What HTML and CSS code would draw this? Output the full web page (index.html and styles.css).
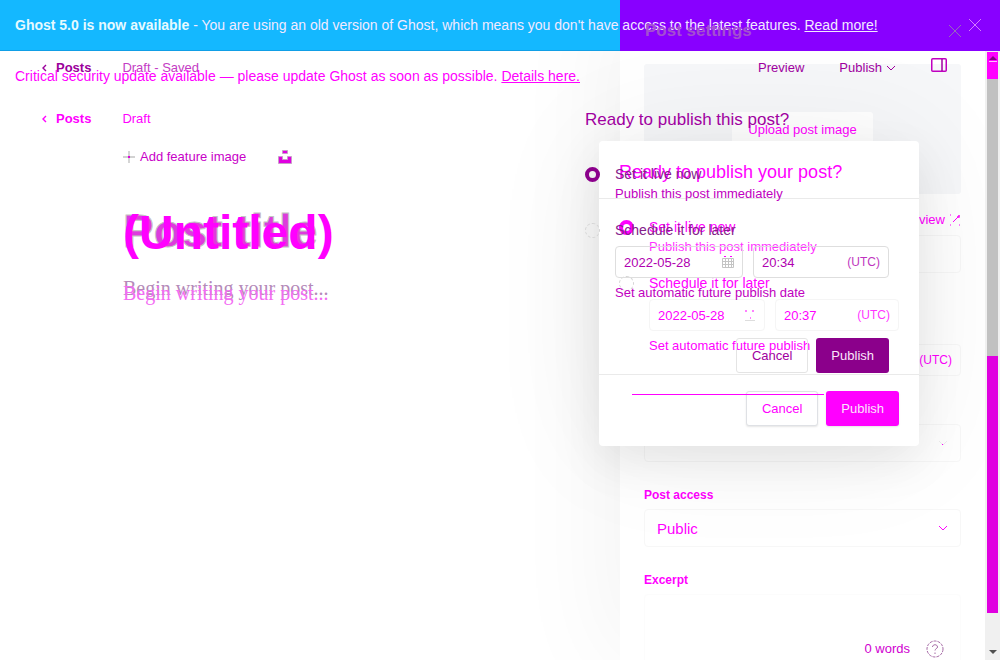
FILE: index.html
```
<!DOCTYPE html>
<html lang="en">
<head>
<meta charset="utf-8">
<title>Ghost editor</title>
<link rel="stylesheet" href="styles.css">
</head>
<body>
<main class="stage">
  <aside class="layer settings">
    <div class="settings-panel">
      <div class="image-box"><button class="upload">Upload post image</button></div>
      <div class="url-row"><a href="#">Preview</a>
        <svg width="12" height="12" viewBox="0 0 12 12" stroke="#f0f" fill="none"><path d="M4 8L9 3" /><path d="M8 3h2V1" stroke-width="1.5"/><path d="M1 1h1M1 11h1M10 11h1" /></svg>
      </div>
      <input class="field url-field" aria-label="Post URL">
      <div class="field date-field"><span>(UTC)</span></div>
      <div class="select-wrap author"><select class="field select" aria-label="Author"><option></option></select><svg width="10" height="6" viewBox="0 0 10 6"><path d="M1 1l4 4 4-4" fill="none" stroke="#eee"/><path d="M4 4h1v1h-1z" fill="#f0f"/></svg></div>
      <label class="label" for="access">Post access</label>
      <div class="select-wrap"><select class="field select" id="access"><option>Public</option></select><svg width="10" height="6" viewBox="0 0 10 6"><path d="M1 1l4 4 4-4" fill="none" stroke="#f0f"/></svg></div>
      <label class="label" for="excerpt">Excerpt</label>
      <textarea class="field excerpt" id="excerpt"></textarea>
    </div>
  </aside>

  <section class="layer front-editor">
    <nav class="bar"><a class="posts" href="#"><svg width="6" height="8" viewBox="0 0 6 8"><path d="M5 1L2 4l3 3" fill="none" stroke="currentColor" stroke-width="1.4"/></svg>Posts</a><span class="saved">Draft - Saved</span>
      <div class="actions"><button class="plain">Preview</button>
      <button class="plain publish-menu">Publish <svg width="10" height="6" viewBox="0 0 10 6"><path d="M1 1l4 4 4-4" fill="none" stroke="currentColor"/></svg></button>
      <button class="plain panel-toggle" aria-label="Settings"><svg width="16" height="14" viewBox="0 0 16 14"><rect x=".75" y=".75" width="14.5" height="12.5" rx="1" fill="none" stroke="#c000c0" stroke-width="1.5"/><path d="M11 1v12" stroke="#a000a0" stroke-width="1.5"/></svg></button></div>
    </nav>
    <div class="feature">
      <button class="plain add"><svg width="12" height="12" viewBox="0 0 12 12"><path d="M6 0v12M0 6h12" stroke="#c4c4c4" stroke-width="1.4"/><path d="M5 5h2v2H5z" fill="#d0d"/></svg>Add feature image</button>
      <button class="plain" aria-label="Unsplash"><svg width="14" height="14" viewBox="0 0 14 14"><path d="M4.500.5h5v3h-5zM.5 6.500h4v3h5v-3h4v7H.5z" fill="#e000e0" stroke="#c8a0c8"/></svg></button>
    </div>
    <h2 class="title post-title">Post title</h2>
    <p class="begin">Begin writing your post...</p>
    <footer class="words"><span>0 words</span><svg width="18" height="18" viewBox="0 0 18 18" fill="none" stroke="#a66aa6"><circle cx="9" cy="9" r="8" stroke-dasharray="3 1"/><path d="M6.500 7c0-3 5-3 5 0 0 1.700-2.500 1.700-2.500 3.500M9 12.500v1.500"/></svg></footer>
  </section>

  <section class="layer back-editor">
    <p class="critical">Critical security update available — please update Ghost as soon as possible. <a href="#">Details here.</a></p>
    <nav class="bar"><a class="posts" href="#"><svg width="6" height="8" viewBox="0 0 6 8"><path d="M5 1L2 4l3 3" fill="none" stroke="currentColor" stroke-width="1.4"/></svg>Posts</a><span>Draft</span></nav>
    <h1 class="title untitled">(Untitled)</h1>
    <p class="begin">Begin writing your post...</p>
  </section>

  <div class="layer modal-layer">
    <form class="modal">
      <header><h2>Ready to publish your post?</h2></header>
      <div class="options">
        <div class="option"><input type="radio" name="m" id="m1" checked><div><label class="name" for="m1">Set it live now</label><p class="dim">Publish this post immediately</p></div></div>
        <div class="option"><input type="radio" name="m" id="m2"><div><label class="name" for="m2">Schedule it for later</label>
          <div class="when"><div class="box"><input aria-label="Date" value="2022-05-28"><svg width="12" height="12" viewBox="0 0 12 12"><path d="M1 2h2M8 2h2M6 9h1" stroke="#f0f"/><path d="M1 11.500h10" stroke="#ddd"/></svg></div><div class="box"><input aria-label="Time" value="20:37"><span>(UTC)</span></div></div>
          <p>Set automatic future publish</p></div></div>
      </div>
      <footer><button type="button" class="btn">Cancel</button><button type="button" class="btn primary">Publish</button></footer>
    </form>
  </div>

  <div class="layer sheet-layer">
    <form class="sheet">
      <h2>Ready to publish this post?</h2>
      <div class="options">
        <div class="option"><input type="radio" name="s" id="s1" checked><div><label class="name" for="s1">Set it live now</label><p>Publish this post immediately</p></div></div>
        <div class="option"><input type="radio" name="s" id="s2"><div><label class="name" for="s2">Schedule it for later</label>
          <div class="when"><div class="box"><input aria-label="Publish date" value="2022-05-28"><svg width="12" height="12" viewBox="0 0 12 12" fill="none" stroke="#c4c4c4"><path d="M.5 2.500h11v9H.5zM0 5.500h12M0 8.500h12M3.500 3v9M6.500 3v9M9.500 3v9"/><path d="M2 .5h2M8 .5h2" stroke="#f0f"/></svg></div><div class="box"><input aria-label="Publish time" value="20:34"><span>(UTC)</span></div></div>
          <p>Set automatic future publish date</p></div></div>
      </div>
      <footer><button type="button" class="btn">Cancel</button><button type="button" class="btn primary">Publish</button></footer>
      <div class="rule"></div>
    </form>
  </div>

  <div class="layer banner-layer">
    <div class="banner">
      <p><strong>Ghost 5.0 is now available</strong> - You are using an old version of Ghost, which means you don't have access to the latest features. <a href="#">Read more!</a></p>
      <button class="plain" aria-label="Dismiss"><svg width="12" height="12" viewBox="0 0 12 12"><path d="M0 0l12 12M12 0L0 12" stroke="#d47bff"/></svg></button>
    </div>
  </div>
  <div class="layer settings-title-layer"><div class="settings-title"><h3>Post settings</h3><button class="plain" aria-label="Close settings"><svg width="12" height="12" viewBox="0 0 12 12"><path d="M0 0l12 12M12 0L0 12" stroke="#956bb9"/></svg></button></div></div>
  <div class="layer scroll-layer"><div class="scrollbar"><div class="up"><svg width="10" height="6" viewBox="0 0 10 6"><path d="M5 0l4 4H1z" fill="#850085"/><path d="M1 5.500h8" stroke="#fbf"/></svg></div><div class="thumb"></div><div class="low"></div><div class="down"><svg width="8" height="4" viewBox="0 0 8 4"><path d="M0 0h8L4 4z" fill="#505050"/></svg></div></div></div>
</main>
</body>
</html>
```
FILE: styles.css
```
* { box-sizing: border-box; }
body, h1, h2, h3, p { margin: 0; }
body {
  font: 13px/19px "Liberation Sans", Arial, sans-serif;
  color: #f0f;
  background: #fff;
}
button, input, select, textarea { font: inherit; color: inherit; margin: 0; }
a { color: inherit; }
svg { display: block; flex: none; }
.stage { position: relative; min-height: 100vh; overflow: hidden; }
.layer { position: absolute; inset: 0; pointer-events: none; }
.plain { display: flex; align-items: center; border: 0; padding: 0; background: none; }

/* Settings panel */
.settings { display: flex; justify-content: flex-end; }
.settings-panel {
  width: 380px;
  padding: 64px 39px 0 24px;
  background: #fff;
  box-shadow: -10px 0 100px rgba(0, 0, 0, .05);
  display: flex;
  flex-direction: column;
}
.image-box { height: 130px; flex: none; background: #f6f7f9; border-radius: 3px; display: flex; justify-content: center; align-items: center; }
.upload { height: 34px; padding: 0 16px; border: 0; border-radius: 3px; background: #fff; }
.url-row { display: flex; justify-content: flex-end; align-items: center; gap: 4px; margin-top: 16px; }
.url-row a { text-decoration: none; }
.field { width: 100%; height: 38px; flex: none; border: 1px solid #f7f7f7; border-radius: 4px; background: transparent; }
.url-field { margin-top: 6px; }
.date-field { display: flex; justify-content: flex-end; align-items: center; height: 32px; margin-top: 71px; padding-right: 8px; font-size: 12px; }
.select-wrap { display: grid; align-items: center; }
.select-wrap > * { grid-area: 1 / 1; }
.select-wrap svg { justify-self: end; margin-right: 13px; }
.author { margin-top: 48px; }
.select { appearance: none; padding: 0 12px; font-size: 15px; }
.label { margin: 24px 0 4px; font-size: 12px; font-weight: bold; }
.excerpt { height: 80px; border-color: #fcfcfc; resize: none; }

/* Editor */
.critical { font-size: 14px; padding-left: 15px; }
.back-editor { padding-top: 67px; }
.front-editor { padding-top: 58px; color: #b800b8; display: flex; flex-direction: column; }
.bar { display: flex; align-items: center; gap: 31px; padding: 0 53px 0 41px; }
.back-editor .bar { margin-top: 23px; }
.posts { display: flex; align-items: center; gap: 9px; text-decoration: none; font-weight: bold; }
.front-editor .posts { color: #9b009b; }
.saved { color: #c43cc4; }
.actions { display: flex; align-items: center; gap: 35px; margin-left: auto; color: #a000a0; }
.publish-menu { gap: 4px; }
.panel-toggle { padding-bottom: 5px; }
.feature { display: flex; align-items: center; gap: 32px; padding: 70px 0 0 123px; }
.add { gap: 5px; color: #c800c8; }
.title { padding-left: 123px; font-weight: bold; line-height: 58px; }
.untitled { margin-top: 76px; font-size: 48px; }
.post-title { margin-top: 36px; font-size: 46px; color: #dc3cdc; -webkit-text-stroke: 1px #c4c4c4; }
.begin { padding-left: 123px; font: 20px/24px "Liberation Serif", Georgia, serif; }
.back-editor .begin { margin-top: 19px; color: #f36df3; }
.front-editor .begin { margin-top: 16px; color: #b58ab9; }
.words { display: flex; justify-content: flex-end; align-items: center; gap: 16px; margin-top: auto; padding: 0 56px 2px 0; color: #d000d0; }

/* Publish dialogs */
.modal-layer { display: flex; justify-content: flex-end; align-items: flex-start; padding: 141px 81px 0 0; }
.modal {
  width: 320px;
  background: #fff;
  border-radius: 4px;
  box-shadow: 0 0 120px rgba(0, 0, 0, .07), 0 16px 46px rgba(0, 0, 0, .08);
}
.modal header { padding: 20px 20px 15px; border-bottom: 1px solid #eaeaea; }
.modal h2, .sheet h2 { font-weight: normal; line-height: 22px; }
.modal h2 { font-size: 18px; }
.sheet h2 { font-size: 17px; color: #a000a0; }
.options { display: flex; flex-direction: column; gap: 18px; }
.modal .options { padding: 19px 20px; }
.option { display: flex; gap: 15px; }
.option > div { flex: 1; min-width: 0; }
.option > input { appearance: none; flex: none; width: 15px; height: 15px; margin-top: 2px; border: 1px dashed #d4d4d4; border-radius: 50%; }
.option > input:checked { border: 4px solid #f0f; }
.name { display: block; font-size: 14px; }
.dim { opacity: .8; }
.when { display: flex; gap: 10px; margin: 6px 0 5px; }
.box { flex: 1 1 90px; min-width: 0; display: flex; align-items: center; justify-content: space-between; height: 32px; padding: 0 8px; border: 1px solid #f5f5f5; border-radius: 4px; }
.box + .box { flex-basis: 98px; }
.box input { min-width: 0; width: 72px; padding: 0; border: 0; background: none; }
.box span { font-size: 12px; opacity: .8; }
.modal footer, .sheet footer { display: flex; justify-content: flex-end; gap: 8px; }
.modal footer { padding: 16px 20px 20px; border-top: 1px solid #eaeaea; }
.btn { height: 35px; padding: 0 15px; border: 1px solid #dfe1e5; border-radius: 3px; background: #fff; }
.modal .btn { box-shadow: 0 1px 2px rgba(0, 0, 0, .1); }
.btn.primary { border: 0; padding: 0 15px; color: #fbe6fb; background: #f0f; }
.sheet-layer { display: flex; justify-content: flex-end; align-items: flex-start; padding: 109px 111px 0 0; }
.sheet { width: 304px; color: #c000c0; }
.sheet .options { margin-top: 34px; }
.sheet .option > input:checked { border-color: #8b008b; }
.sheet .name { color: #85208a; }
.sheet .box { border-color: #dedede; color: #b000b0; }
.sheet footer { margin-top: 36px; }
.sheet .btn { color: #a000a0; background: none; border-color: #e4e4e4; }
.sheet .btn.primary { color: #fbe6fb; background: #8b008b; }
.rule { width: 192px; height: 1px; margin: 21px 65px 0 auto; background: #f0f; }

/* Upgrade banner */
.banner {
  display: flex;
  align-items: center;
  justify-content: space-between;
  height: 51px;
  padding: 0 19px 1px 15px;
  color: #f2eaff;
  font-size: 14px;
  background:
    linear-gradient(#80f, #80f) right / 380px 100% no-repeat,
    linear-gradient(#119fe6, #119fe6) bottom / 100% 1px no-repeat,
    #14b8ff;
}
.banner strong { color: #e6faff; }
.settings-title { display: flex; justify-content: space-between; align-items: center; width: 380px; margin-left: auto; padding: 20px 39px 0 25px; color: #a44fd0; }
.settings-title h3 { font-size: 17px; line-height: 22px; font-weight: bold; }

/* Scrollbar */
.scroll-layer { display: flex; justify-content: flex-end; padding-top: 51px; }
.scrollbar { display: flex; flex-direction: column; width: 15px; padding: 1px 2px 0; background: #f0f0f0; }
.up { display: flex; justify-content: center; height: 27px; padding-top: 4px; background: #f0f; }
.thumb { flex: 277; background: #c1c1c1; }
.low { flex: 257; background: #e000e0; }
.down { display: flex; justify-content: center; align-items: flex-end; height: 47px; padding-bottom: 6px; }
```
